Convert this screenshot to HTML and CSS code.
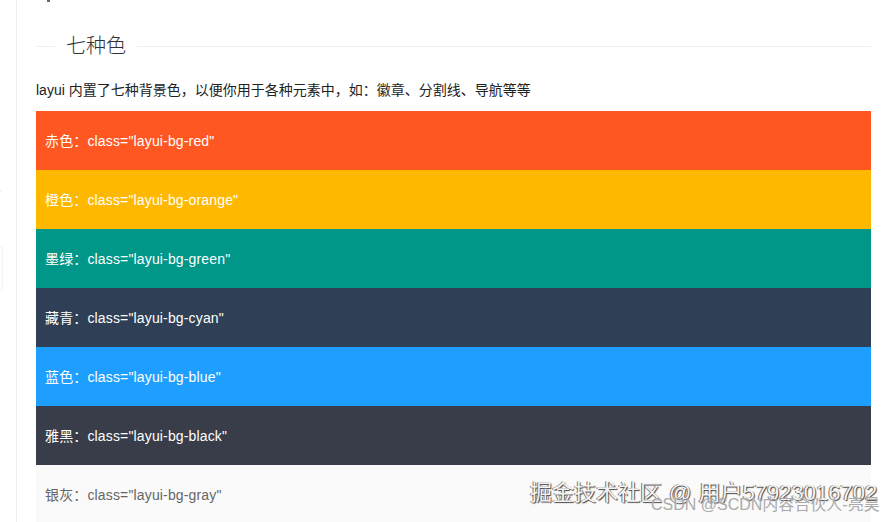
FILE: index.html
```html
<!DOCTYPE html>
<html lang="zh-CN">
<head>
  <meta charset="UTF-8">
  <meta name="viewport" content="width=device-width, initial-scale=1.0">
  <title>layui 七种色</title>
  <link rel="stylesheet" href="styles.css">
</head>
<body>

<div class="page">
  <div class="side">
    <div class="side-tick"></div>
    <div class="side-item"></div>
  </div>

  <div class="main">
    <div class="speck"></div>

    <fieldset class="title-line">
      <legend>七种色</legend>
    </fieldset>

    <p class="intro">layui 内置了七种背景色，以便你用于各种元素中，如：徽章、分割线、导航等等</p>

    <div class="color-row bg-red">赤色：class="layui-bg-red"</div>
    <div class="color-row bg-orange">橙色：class="layui-bg-orange"</div>
    <div class="color-row bg-green">墨绿：class="layui-bg-green"</div>
    <div class="color-row bg-cyan">藏青：class="layui-bg-cyan"</div>
    <div class="color-row bg-blue">蓝色：class="layui-bg-blue"</div>
    <div class="color-row bg-black">雅黑：class="layui-bg-black"</div>
    <div class="color-row bg-gray">银灰：class="layui-bg-gray"</div>
  </div>
</div>

<div class="mark mark-juejin">掘金技术社区 @ 用户57923016702</div>
<div class="mark mark-csdn">CSDN @SCDN内容合伙人-亮昊</div>

</body>
</html>
```

FILE: styles.css
```css
html, body {
  margin: 0;
  height: 522px;
  overflow: hidden;
  background-color: #fff;
}
body {
  position: relative;
  color: #333;
  font-family: "Liberation Sans", "Noto Sans CJK SC", sans-serif;
  font-size: 14px;
}
.page {
  display: flex;
  height: 522px;
  overflow: hidden;
}
.side {
  width: 17px;
  height: 522px;
  border-right: 1px solid #eee;
  padding-top: 190px;
  box-sizing: border-box;
}
.side-tick {
  width: 1px;
  height: 2px;
  background-color: #eee;
}
.side-item {
  width: 2px;
  height: 41px;
  margin-top: 55px;
  background-color: #fff;
  border: 1px solid #f3f3f3;
  border-left: none;
  border-radius: 0 2px 2px 0;
}
.main {
  width: 835px;
  padding-left: 19px;
}
.speck {
  width: 3px;
  height: 2px;
  margin-left: 11px;
  margin-bottom: 32px;
  background-color: #666;
}
.title-line {
  margin: 0;
  padding: 0;
  border: none;
  border-top: 1px solid #eee;
  height: 44px;
}
.title-line legend {
  margin-left: 19px;
  padding: 0 11px;
  font-size: 20px;
  font-weight: 300;
  line-height: 24px;
}
.intro {
  margin: 0 0 10px;
  line-height: 22px;
  font-size: 14px;
  color: #222;
}
.color-row {
  height: 59px;
  line-height: 61px;
  padding-left: 9px;
  color: #fff;
  font-size: 14px;
  letter-spacing: 0.15px;
}
.bg-red { background-color: #ff5722; }
.bg-orange { background-color: #ffb800; }
.bg-green { background-color: #009688; }
.bg-cyan { background-color: #2f4056; }
.bg-blue { background-color: #1e9fff; }
.bg-black { background-color: #393d49; }
.bg-gray { background-color: #fafafa; color: #666; }

/* watermarks sit on top of the last rows */
.mark {
  position: absolute;
  white-space: nowrap;
}
.mark-juejin {
  left: 530px;
  top: 480px;
  font-size: 22px;
  line-height: 26px;
  word-spacing: 1px;
  color: #f4f4f4;
  text-shadow: 1px 1px 1px #444, -1px 0 0 #777;
}
.mark-csdn {
  left: 651px;
  top: 496px;
  font-size: 16px;
  line-height: 18px;
  color: #aaa;
}
```
